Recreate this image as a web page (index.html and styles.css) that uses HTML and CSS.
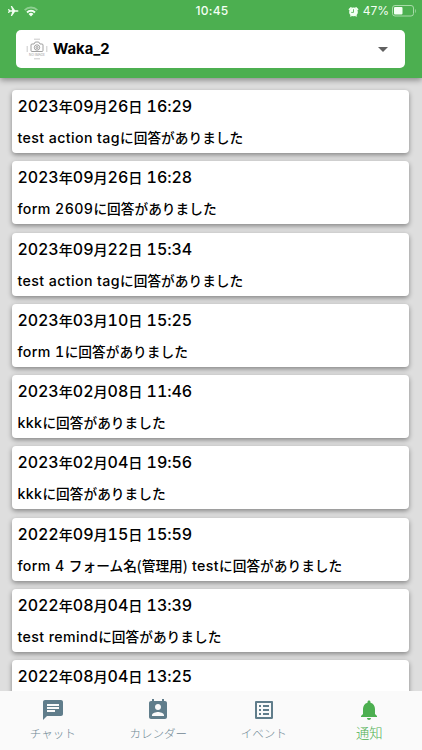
FILE: index.html
```html
<!DOCTYPE html>
<html lang="ja">
<head>
    <meta charset="UTF-8">
    <meta name="viewport" content="width=device-width, initial-scale=1.0">
    <title>通知</title>
    <link rel="stylesheet" href="styles.css">
</head>
<body>
    <header class="header">
        <div class="status-bar">
            <div class="status-left">
                <svg class="plane" viewBox="0 0 24 24"><path d="M22 12c0-.9-.8-1.6-2-1.6h-5L9 2H6.500l3 8.400H5L3 8H1l1.300 4L1 16h2l2-2.400h4.500l-3 8.400H9l6-8.400h5c1.200 0 2-.7 2-1.600z"/></svg>
                <svg class="wifi" viewBox="0 0 24 18"><path class="faint" d="M0 5.500a17 17 0 0 1 24 0l-2.400 2.400a13.600 13.600 0 0 0-19.200 0z"/><path d="M4 9.400a11.300 11.300 0 0 1 16 0l-2.400 2.400a8 8 0 0 0-11.200 0zM7.800 13.200a6 6 0 0 1 8.400 0L12 17.500z"/></svg>
            </div>
            <div class="clock">10:45</div>
            <div class="status-right">
                <svg class="alarm" viewBox="0 0 24 24"><circle cx="12" cy="13" r="9.500"/><path d="M1 7l5-5 3 2-6 6zM23 7l-5-5-3 2 6 6zM4 23l2-4 3 2-2 2zM20 23l-2-4-3 2 2 2z"/><path class="hands" d="M12 7v7H7"/></svg>
                <span class="percent">47%</span>
                <svg class="battery" viewBox="0 0 25 12"><rect class="outline" x=".5" y=".5" width="21" height="10.500" rx="2.500"/><rect x="2" y="2" width="8.500" height="7.500" rx="1"/><path class="faint" d="M23 4v4c1.500-.7 1.500-3.300 0-4z"/></svg>
            </div>
        </div>
        <div class="select">
            <svg class="avatar" viewBox="0 0 22 22">
                <path class="ring" d="M8 1.200h6M8 20.800h6M1.200 8v6M20.800 8v6"/>
                <path class="camera" d="M6 6h2l1.300-2h3.400L14 6h2q1 0 1 1v5.500q0 1-1 1H6q-1 0-1-1V7q0-1 1-1z"/>
                <circle class="camera" cx="11" cy="9.500" r="2.700"/>
                <circle class="camera" cx="11" cy="9.500" r="1"/>
                <text x="11" y="17.800">NO IMAGE</text>
            </svg>
            <span class="select-name">Waka_2</span>
            <svg class="arrow" viewBox="0 0 10 5"><path d="M0 0h10L5 5z"/></svg>
        </div>
    </header>

    <main class="list">
        <div class="card">
            <div class="date">2023<span>年</span>09<span>月</span>26<span>日</span> 16:29</div>
            <div class="message">test action tag<span>に回答がありました</span></div>
        </div>
        <div class="card">
            <div class="date">2023<span>年</span>09<span>月</span>26<span>日</span> 16:28</div>
            <div class="message">form 2609<span>に回答がありました</span></div>
        </div>
        <div class="card">
            <div class="date">2023<span>年</span>09<span>月</span>22<span>日</span> 15:34</div>
            <div class="message">test action tag<span>に回答がありました</span></div>
        </div>
        <div class="card">
            <div class="date">2023<span>年</span>03<span>月</span>10<span>日</span> 15:25</div>
            <div class="message">form 1<span>に回答がありました</span></div>
        </div>
        <div class="card">
            <div class="date">2023<span>年</span>02<span>月</span>08<span>日</span> 11:46</div>
            <div class="message">kkk<span>に回答がありました</span></div>
        </div>
        <div class="card">
            <div class="date">2023<span>年</span>02<span>月</span>04<span>日</span> 19:56</div>
            <div class="message">kkk<span>に回答がありました</span></div>
        </div>
        <div class="card">
            <div class="date">2022<span>年</span>09<span>月</span>15<span>日</span> 15:59</div>
            <div class="message">form 4 <span>フォーム名(管理用)</span> test<span>に回答がありました</span></div>
        </div>
        <div class="card">
            <div class="date">2022<span>年</span>08<span>月</span>04<span>日</span> 13:39</div>
            <div class="message">test remind<span>に回答がありました</span></div>
        </div>
        <div class="card">
            <div class="date">2022<span>年</span>08<span>月</span>04<span>日</span> 13:25</div>
        </div>
    </main>

    <nav class="tabs">
        <div class="tab">
            <svg viewBox="0 0 24 24"><path d="M20 2H4c-1.100 0-2 .9-2 2v18l4-4h14c1.100 0 2-.9 2-2V4c0-1.100-.9-2-2-2zM6 9h12v2H6V9zm8 5H6v-2h8v2zm4-6H6V6h12v2z"/></svg>
            <span>チャット</span>
        </div>
        <div class="tab">
            <svg viewBox="0 0 24 24"><path d="M19 3h-1V1h-2v2H8V1H6v2H5c-1.100 0-2 .9-2 2v14c0 1.100.9 2 2 2h14c1.100 0 2-.9 2-2V5c0-1.100-.9-2-2-2zm-7 3c1.700 0 3 1.300 3 3s-1.300 3-3 3-3-1.300-3-3 1.300-3 3-3zm6 12H6v-1c0-2 4-3.100 6-3.100s6 1.100 6 3.100v1z"/></svg>
            <span>カレンダー</span>
        </div>
        <div class="tab">
            <svg viewBox="0 0 24 24"><path d="M19 5v14H5V5h14m1.100-2H3.900c-.5 0-.9.4-.9.9v16.200c0 .4.4.9.9.9h16.200c.4 0 .9-.5.9-.9V3.900c0-.5-.5-.9-.9-.9zM11 7h6v2h-6V7zm0 4h6v2h-6v-2zm0 4h6v2h-6v-2zM7 7h2v2H7V7zm0 4h2v2H7v-2zm0 4h2v2H7v-2z"/></svg>
            <span>イベント</span>
        </div>
        <div class="tab active">
            <svg viewBox="0 0 24 24"><path d="M12 22c1.100 0 2-.9 2-2h-4c0 1.100.9 2 2 2zm6-6v-5c0-3.070-1.640-5.640-4.500-6.320V4c0-.83-.67-1.500-1.500-1.500s-1.500.67-1.500 1.500v.68C7.630 5.360 6 7.920 6 11v5l-2 2v1h16v-1l-2-2z"/></svg>
            <span>通知</span>
        </div>
    </nav>
</body>
</html>
```

FILE: styles.css
```css
* {
    box-sizing: border-box;
}

body {
    margin: 0;
    height: 750px;
    overflow: hidden;
    display: flex;
    flex-direction: column;
    background-color: #dedede;
    font-family: Inter, "Noto Sans CJK JP", sans-serif;
    color: #000;
}

/* header */
.header {
    flex: none;
    height: 78px;
    background-color: #4caf50;
    box-shadow: 0 2px 6px rgba(0, 0, 0, 0.4);
    z-index: 1;
}

.status-bar {
    display: grid;
    grid-template-columns: 1fr auto 1fr;
    align-items: center;
    height: 22px;
    padding: 0 5px 0 7px;
    color: #f3fff3;
    font-size: 12px;
    line-height: 22px;
}

.status-bar svg {
    fill: #f3fff3;
}

.status-left,
.status-right {
    display: flex;
    align-items: center;
}

.status-right {
    justify-content: flex-end;
}

.clock {
    font-weight: 500;
    font-size: 12px;
    letter-spacing: 0.3px;
}

.plane {
    width: 13px;
    height: 12px;
    margin-right: 4px;
}

.wifi {
    width: 14px;
    height: 11px;
}

.status-bar .faint {
    opacity: 0.4;
}

.alarm {
    width: 11px;
    height: 11px;
    margin-right: 4px;
}

.alarm .hands {
    fill: none;
    stroke: #4caf50;
    stroke-width: 1.8;
}

.battery {
    width: 25px;
    height: 12px;
    margin-left: 3px;
}

.battery .outline {
    fill: none;
    stroke: #a8dba9;
}

.select {
    display: flex;
    align-items: center;
    height: 38px;
    margin: 8px 17px 0 16px;
    padding: 0 17px 0 10px;
    background-color: #fff;
    border-radius: 5px;
}

.avatar {
    width: 22px;
    height: 22px;
}

.avatar path,
.avatar circle {
    fill: none;
    stroke: #888;
    stroke-width: 0.8;
}

.avatar .ring {
    stroke: #bbb;
}

.avatar text {
    fill: #999;
    font-size: 3.2px;
    text-anchor: middle;
}

.select-name {
    flex: 1;
    margin-left: 5px;
    font-size: 14.8px;
    font-weight: 700;
    line-height: 20px;
    padding-bottom: 1px;
}

.arrow {
    width: 10px;
    height: 5px;
    fill: #616161;
}

/* notifications */
.list {
    flex: 1;
    min-height: 0;
    overflow: hidden;
    display: flex;
    flex-direction: column;
    gap: 8.25px;
    padding: 12px 12.6px 0 12.4px;
}

.card {
    flex: none;
    height: 63px;
    padding: 5px 5px 0;
    background-color: #fff;
    border-radius: 4px;
    box-shadow: 0 2px 5px rgba(0, 0, 0, 0.4);
    white-space: nowrap;
    font-weight: 500;
    font-feature-settings: "tnum";
}

.date {
    height: 22px;
    line-height: 22px;
    font-size: 16px;
    letter-spacing: -0.05px;
}

.date span {
    font-family: "Noto Sans CJK JP", sans-serif;
    font-size: 14.2px;
    line-height: 1;
}

.message {
    height: 22px;
    margin-top: 10px;
    line-height: 22px;
    font-size: 14.2px;
    letter-spacing: 0.4px;
}

.message span {
    font-family: "Noto Sans CJK JP", sans-serif;
    font-size: 13.7px;
    line-height: 1;
    letter-spacing: 0;
}

/* bottom tabs */
.tabs {
    flex: none;
    display: grid;
    grid-template-columns: repeat(4, 1fr);
    height: 59px;
    background-color: #fafafa;
    z-index: 1;
}

.tab {
    display: flex;
    flex-direction: column;
    align-items: center;
    padding-top: 7px;
    color: #6f8894;
    font-family: "Noto Sans CJK JP", sans-serif;
    font-size: 11.5px;
    font-weight: 300;
}

.tab svg {
    width: 24px;
    height: 24px;
    fill: #607d8b;
}

.tab span {
    line-height: 23px;
}

.tab.active {
    color: #4caf50;
    font-size: 13.3px;
}

.tab.active svg {
    fill: #4caf50;
}

.tab.active span {
    line-height: 21px;
}
```
